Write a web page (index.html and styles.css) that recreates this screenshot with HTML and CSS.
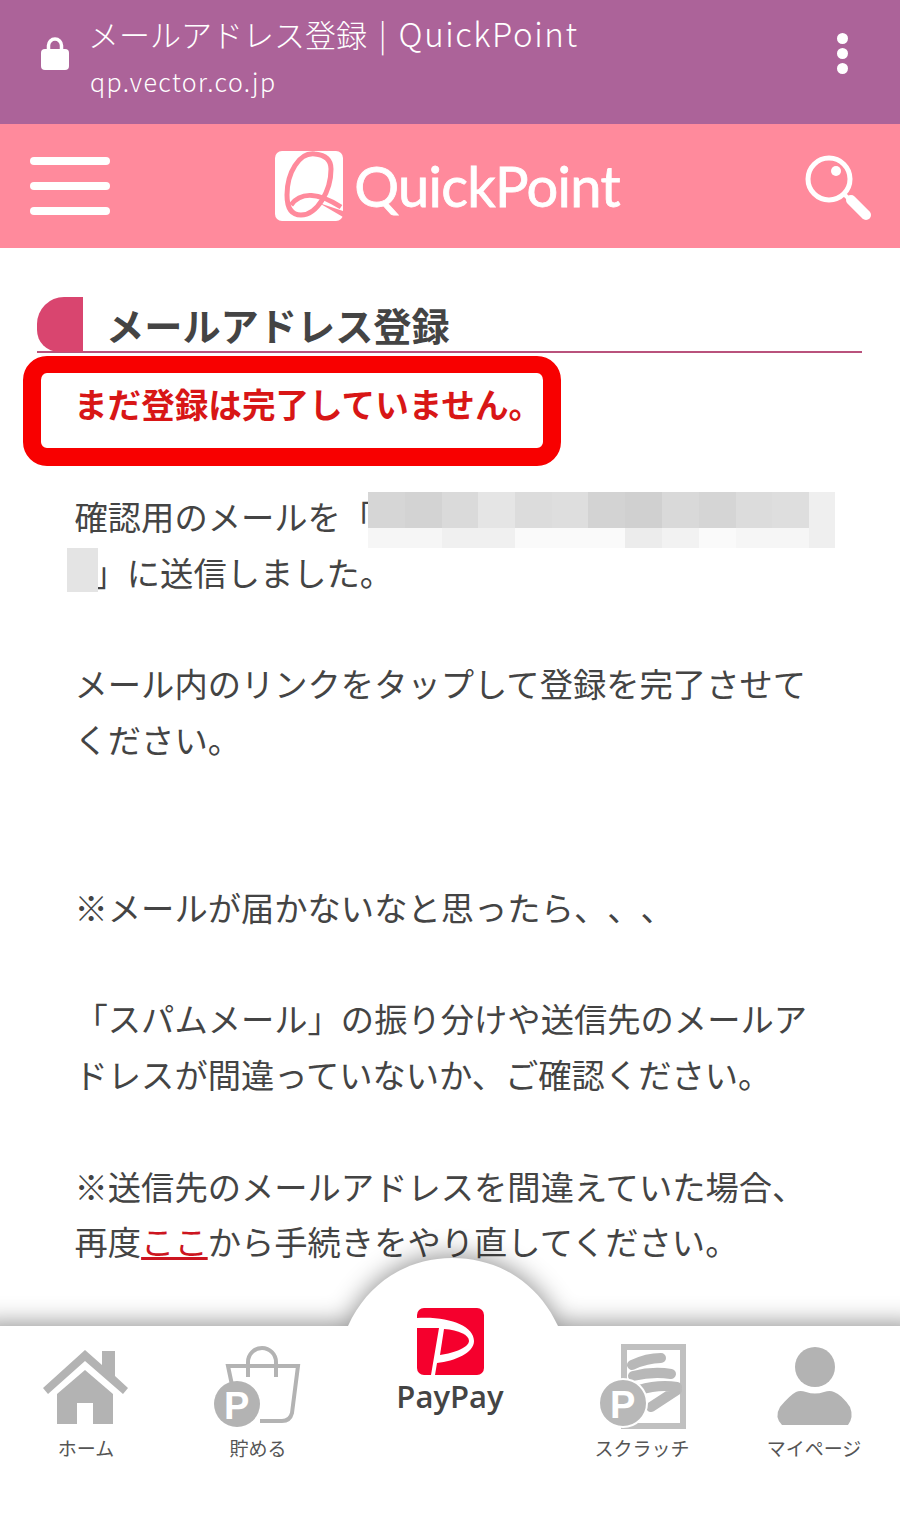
FILE: index.html
```html
<!DOCTYPE html>
<html lang="ja">
<head>
  <meta charset="UTF-8">
  <meta name="viewport" content="width=device-width, initial-scale=1.0">
  <title>メールアドレス登録 | QuickPoint</title>
  <link rel="stylesheet" href="styles.css">
</head>
<body>
  <!-- ブラウザのタイトルバー -->
  <div class="browser-bar">
    <svg class="lock" viewBox="0 0 28 34">
      <path class="lock-shackle" d="M7.5 15V9.5a6.5 6.5 0 0 1 13 0V15"/>
      <rect y="13" width="28" height="21" rx="4"/>
    </svg>
    <div class="browser-text">
      <div class="browser-title">メールアドレス登録 | <span class="browser-site">QuickPoint</span></div>
      <div class="browser-url">qp.vector.co.jp</div>
    </div>
    <div class="kebab"><span></span><span></span><span></span></div>
  </div>

  <!-- サイトヘッダー -->
  <header class="site-header">
    <div class="hamburger"><span></span><span></span><span></span></div>
    <div class="logo">
      <svg class="logo-mark" viewBox="0 0 68 70">
        <rect width="68" height="70" rx="7" fill="#fff"/>
        <path class="logo-q" d="M40 3C24 1 12 22 12 44C12 56 16 64 26 64C42 64 56 40 56 18C56 9 50 4 40 3Z"/>
        <path class="logo-q" d="M16 54C26 40 44 42 66 56"/>
        <path class="logo-tail" d="M44 52L68 60V66Z"/>
      </svg>
      <span class="logo-text">QuickPoint</span>
    </div>
    <svg class="search" viewBox="0 0 70 70">
      <circle class="search-ring" cx="26" cy="26" r="21"/>
      <circle cx="33" cy="18" r="5" fill="#fff"/>
      <path class="search-neck" d="M42 42L50 50"/>
      <path class="search-handle" d="M48 47L63 62"/>
    </svg>
  </header>

  <main class="content">
    <h1 class="page-heading">メールアドレス登録</h1>
    <div class="notice">まだ登録は完了していません。</div>

    <p class="message">
      確認用のメールを「<br>
      <span class="bracket-indent"></span>」に送信しました。<br>
      <br>
      メール内のリンクをタップして登録を完了させて<br>
      ください。<br>
      <br>
      <br>
      ※メールが届かないなと思ったら、、、<br>
      <br>
      「スパムメール」の振り分けや送信先のメールア<br>
      ドレスが間違っていないか、ご確認ください。<br>
      <br>
      ※送信先のメールアドレスを間違えていた場合、<br>
      再度<a class="text-link" href="#">ここ</a>から手続きをやり直してください。
      <!-- メールアドレスのモザイク -->
      <span class="mosaic-line1"><span class="mosaic-dark"></span><span class="mosaic-light"></span></span>
      <span class="mosaic-line2"></span>
    </p>
  </main>

  <!-- 下部ナビ -->
  <nav class="bottom-nav">
    <svg class="nav-bg" viewBox="0 0 900 265" preserveAspectRatio="none">
      <path d="M-20 68H348C368 24 408 0 452 0C498 0 538 24 558 68H920V285H-20Z"/>
    </svg>
    <a class="nav-item" href="#">
      <svg class="nav-icon" viewBox="-2 -3 96 88">
        <polygon points="3,43 45,5 62,20 62,6 75,6 75,31 88,43 83,49 45,16 8,49"/>
        <polygon points="45,25 73,49 73,79 53,79 53,58 37,58 37,79 17,79 17,49"/>
      </svg>
      <span>ホーム</span>
    </a>
    <a class="nav-item" href="#">
      <svg class="nav-icon" viewBox="0 -3 96 88">
        <path class="icon-line" d="M38 32V17a14 14 0 0 1 28 0V32"/>
        <path class="icon-line" d="M22 40L18 21H88L82 68Q80 76 72 76H50"/>
        <circle cx="27" cy="59" r="23"/>
        <text class="icon-p" x="14" y="74">P</text>
      </svg>
      <span>貯める</span>
    </a>
    <a class="nav-item nav-paypay" href="#">
      <svg class="paypay-mark" viewBox="0 0 67 67">
        <rect width="67" height="67" rx="7" fill="#f5002d"/>
        <path fill="#fff" d="M0 10C32 8 57 18 57 33C57 45 38 53 20 55L18 67H14L22 20L0 20Z"/>
        <path fill="#f5002d" d="M27 21C42 22 52 27 52 33C52 39 38 45 23 47Z"/>
      </svg>
      <span class="paypay-text">PayPay</span>
    </a>
    <a class="nav-item" href="#">
      <svg class="nav-icon" viewBox="-1 2 96 88">
        <rect class="scratch-frame" x="29" y="7" width="59" height="79"/>
        <path class="scratch-scribble" d="M37 25Q52 18 66 18M38 36Q58 31 76 34M44 50Q64 44 82 47M56 67L82 50"/>
        <circle class="scratch-coin" cx="28" cy="63" r="24"/>
        <text class="icon-p" x="15" y="78">P</text>
      </svg>
      <span>スクラッチ</span>
    </a>
    <a class="nav-item" href="#">
      <svg class="nav-icon" viewBox="-4 -3 96 88">
        <circle cx="45" cy="22" r="20"/>
        <path d="M12 80Q4 72 10 62Q20 50 26 47Q30 45 36 47Q45 50 54 47Q60 45 64 47Q72 50 80 62Q84 72 78 80Z"/>
      </svg>
      <span>マイページ</span>
    </a>
  </nav>
</body>
</html>
```

FILE: styles.css
```css
html, body {
  margin: 0;
  padding: 0;
  background: #fff;
  font-family: "Noto Sans CJK JP", "Noto Sans", sans-serif;
  text-spacing-trim: space-all;
}

body {
  height: 1523px;
  overflow: hidden;
  position: relative;
}

/* ブラウザのタイトルバー */
.browser-bar {
  height: 124px;
  box-sizing: border-box;
  padding: 0 52px 0 41px;
  display: flex;
  align-items: flex-start;
  background: #ac6399;
  color: #fff;
}

.lock {
  width: 28px;
  height: 34px;
  margin-top: 36px;
  flex: none;
  fill: #fff;
}

.lock-shackle {
  fill: none;
  stroke: #fff;
  stroke-width: 3.5;
}

.browser-text {
  margin-left: 21px;
  padding-top: 10px;
}

.browser-title {
  font-size: 31px;
  line-height: 46px;
  font-weight: 300;
  white-space: nowrap;
  word-spacing: 5px;
  margin-left: -2px;
}

.browser-site {
  font-size: 33px;
  letter-spacing: 1.6px;
}

.browser-url {
  font-size: 25px;
  line-height: 40px;
  margin-top: 4px;
  font-weight: 300;
  letter-spacing: 1.4px;
}

.kebab {
  margin-left: auto;
  margin-top: 33px;
  display: flex;
  flex-direction: column;
  gap: 4px;
}

.kebab span {
  width: 11px;
  height: 11px;
  border-radius: 50%;
  background: #fff;
}

/* サイトヘッダー */
.site-header {
  height: 124px;
  box-sizing: border-box;
  padding: 0 27px 0 30px;
  display: flex;
  align-items: center;
  justify-content: space-between;
  background: #ff8a9c;
}

.hamburger {
  display: flex;
  flex-direction: column;
  gap: 17px;
}

.hamburger span {
  width: 80px;
  height: 8px;
  border-radius: 4px;
  background: #fff;
}

.logo {
  display: flex;
  align-items: center;
  gap: 11px;
  margin-right: 18px;
}

.logo-mark {
  width: 68px;
  height: 70px;
}

.logo-q {
  fill: none;
  stroke: #ff8a9c;
  stroke-width: 5;
}

.logo-tail {
  fill: #ff8a9c;
}

.logo-text {
  font-family: "Lato", sans-serif;
  font-size: 56px;
  line-height: 70px;
  font-weight: 400;
  letter-spacing: -0.7px;
  -webkit-text-stroke: 0.8px #fff;
  color: #fff;
}

.search {
  width: 70px;
  height: 70px;
  margin-top: 4px;
}

.search-ring {
  fill: none;
  stroke: #fff;
  stroke-width: 5;
}

.search-neck {
  stroke: #fff;
  stroke-width: 4;
}

.search-handle {
  stroke: #fff;
  stroke-width: 10;
  stroke-linecap: round;
}

/* 本文 */
.content {
  padding-top: 50px;
  color: #444;
}

.page-heading {
  width: 825px;
  height: 55px;
  box-sizing: border-box;
  margin: 0 0 3px 37px;
  padding-left: 25px;
  display: flex;
  align-items: center;
  gap: 23px;
  font-size: 38.2px;
  line-height: 55px;
  font-weight: 700;
  color: #444;
  border-bottom: 2px solid #b9527c;
}

.page-heading::before {
  content: "";
  width: 46px;
  height: 55px;
  margin-left: -25px;
  border-radius: 27px 0 0 22px;
  background: #d9456f;
}

.notice {
  width: 538px;
  height: 110px;
  box-sizing: border-box;
  margin-left: 23px;
  padding: 0 0 14px 33px;
  display: flex;
  align-items: center;
  border: 18px solid #f80000;
  border-width: 17px 18px 18px;
  border-radius: 24px;
  font-size: 33.6px;
  font-weight: 700;
  color: #d81616;
  white-space: nowrap;
}

.message {
  position: relative;
  margin: 22px 0 0;
  padding-left: 74.5px;
  font-size: 33.3px;
  line-height: 55.8px;
  color: #444;
  white-space: nowrap;
}

.bracket-indent {
  display: inline-block;
  width: 19px;
}

.text-link {
  color: #cc1520;
  text-decoration: underline;
  text-decoration-thickness: 3px;
}

/* モザイクは本文の上に重ねる */
.mosaic-line1 {
  position: absolute;
  left: 368px;
  top: 4px;
  width: 467px;
  height: 56px;
  display: flex;
  flex-direction: column;
}

.mosaic-dark {
  height: 36px;
  background: linear-gradient(90deg,
    #d6d6d6 0 37px, #d3d3d3 37px 74px, #dadada 74px 110px, #e5e5e5 110px 147px,
    #dcdcdc 147px 184px, #dedede 184px 220px, #d3d3d3 220px 257px, #d0d0d0 257px 294px,
    #d9d9d9 294px 331px, #d5d5d5 331px 368px, #dcdcdc 368px 404px, #dedede 404px 441px,
    #efefef 441px);
}

.mosaic-light {
  height: 20px;
  background: linear-gradient(90deg,
    #f6f6f6 0 74px, #f0f0f0 74px 147px, #fafafa 147px 257px, #ececec 257px 294px,
    #f2f2f2 294px 331px, #fafafa 331px 368px, #f6f6f6 368px 441px, #efefef 441px);
}

.mosaic-line2 {
  position: absolute;
  left: 67px;
  top: 60px;
  width: 31px;
  height: 44px;
  background: #e4e4e4;
}

/* 下部ナビ */
.bottom-nav {
  position: absolute;
  left: 0;
  right: 0;
  bottom: 0;
  height: 265px;
  box-sizing: border-box;
  padding-top: 84px;
  display: grid;
  grid-template-columns: 172px 172px 1fr 172px 172px;
  align-items: start;
}

.nav-bg {
  position: absolute;
  top: 0;
  left: 0;
  width: 100%;
  height: 100%;
  overflow: visible;
  fill: #fff;
  filter: drop-shadow(0 -3px 12px rgba(0, 0, 0, 0.42));
}

.nav-item {
  position: relative;
  display: flex;
  flex-direction: column;
  align-items: center;
  font-size: 19px;
  line-height: 24px;
  color: #555;
  text-decoration: none;
  white-space: nowrap;
}

.nav-icon {
  width: 96px;
  height: 88px;
  margin-bottom: 6px;
  fill: #b3b3b3;
}

.icon-line {
  fill: none;
  stroke: #b3b3b3;
  stroke-width: 4;
}

.icon-p {
  font-family: "Liberation Sans", sans-serif;
  font-size: 38px;
  font-weight: 700;
  fill: #fff;
}

.scratch-frame {
  fill: none;
  stroke: #c0c0c0;
  stroke-width: 6;
}

.scratch-scribble {
  fill: none;
  stroke: #b8b8b8;
  stroke-width: 10;
  stroke-linecap: round;
  stroke-linejoin: round;
}

.scratch-coin {
  fill: #b8b8b8;
  stroke: #fff;
  stroke-width: 2;
}

.nav-paypay {
  margin-top: -34px;
}

.paypay-mark {
  width: 67px;
  height: 67px;
}

.paypay-text {
  margin-top: 2px;
  font-family: "Open Sans", sans-serif;
  font-size: 31px;
  line-height: 38px;
  font-weight: 600;
  color: #444;
}
```
